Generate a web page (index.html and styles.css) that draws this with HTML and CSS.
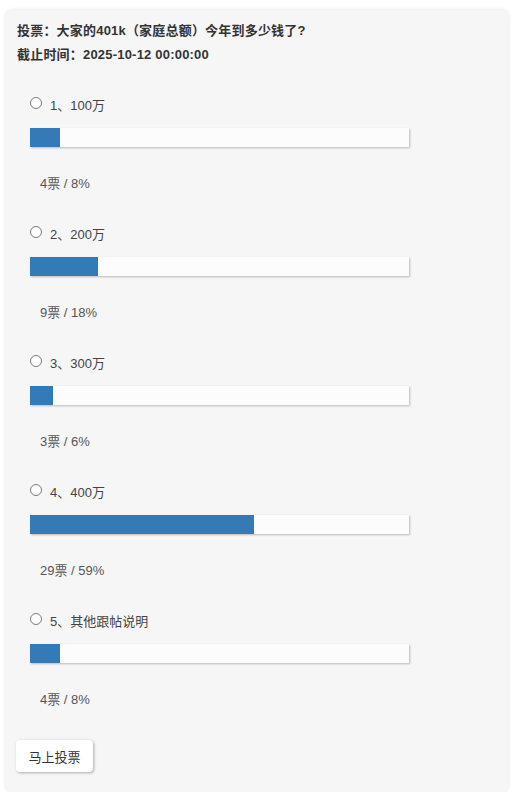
FILE: index.html
```html
<!DOCTYPE html>
<html lang="zh">
<head>
<meta charset="utf-8">
<link rel="stylesheet" href="styles.css">
</head>
<body>
<div class="poll">
  <div class="title">
    <div>投票：大家的401k（家庭总额）今年到多少钱了?</div>
    <div>截止时间：2025-10-12 00:00:00</div>
  </div>
  <div class="options">
    <div class="option">
      <label class="row"><input type="radio" name="v" class="radio"><span>1、100万</span></label>
      <div class="bar"><div class="fill" style="width:8%"></div></div>
      <div class="count">4票 / 8%</div>
    </div>
    <div class="option">
      <label class="row"><input type="radio" name="v" class="radio"><span>2、200万</span></label>
      <div class="bar"><div class="fill" style="width:18%"></div></div>
      <div class="count">9票 / 18%</div>
    </div>
    <div class="option">
      <label class="row"><input type="radio" name="v" class="radio"><span>3、300万</span></label>
      <div class="bar"><div class="fill" style="width:6%"></div></div>
      <div class="count">3票 / 6%</div>
    </div>
    <div class="option">
      <label class="row"><input type="radio" name="v" class="radio"><span>4、400万</span></label>
      <div class="bar"><div class="fill" style="width:59%"></div></div>
      <div class="count">29票 / 59%</div>
    </div>
    <div class="option">
      <label class="row"><input type="radio" name="v" class="radio"><span>5、其他跟帖说明</span></label>
      <div class="bar"><div class="fill" style="width:8%"></div></div>
      <div class="count">4票 / 8%</div>
    </div>
  </div>
  <button class="btn">马上投票</button>
</div>
</body>
</html>
```

FILE: styles.css
```css
* { box-sizing: border-box; }
body {
  margin: 0;
  background: #fff;
  font-family: "Liberation Sans", "Noto Sans CJK SC", sans-serif;
  font-size: 13px;
  color: #333;
}
.poll {
  margin: 10px 0 0 6px;
  width: 502px;
  height: 782px;
  background: #f6f6f6;
  border-radius: 6px;
  box-shadow: 0 0 4px rgba(0,0,0,0.12);
  padding: 9px 10px 20px 11px;
}
.title {
  font-weight: bold;
  line-height: 24px;
  color: #333;
  letter-spacing: 0.2px;
}
.options {
  margin-top: 27px;
  padding-left: 13px;
  display: flex;
  flex-direction: column;
  gap: 29px;
}
.option {
  display: flex;
  flex-direction: column;
}
.row {
  display: flex;
  align-items: center;
  height: 20px;
  color: #444;
}
.radio {
  appearance: none;
  -webkit-appearance: none;
  width: 12px;
  height: 12px;
  margin: -2px 8px 0 0;
  border: 1px solid #7a7a7a;
  border-radius: 50%;
  background: #fff;
}
.bar {
  margin-top: 14px;
  width: 379px;
  height: 19px;
  background: #fcfcfc;
  box-shadow: 1px 1px 2px rgba(0,0,0,0.25);
  display: flex;
}
.fill {
  height: 100%;
  background: #337ab7;
}
.count {
  margin-top: 27px;
  padding-left: 10px;
  line-height: 20px;
  color: #555;
}
.btn {
  margin-top: 30px;
  margin-left: -1px;
  width: 77px;
  height: 32px;
  background: #fff;
  border: none;
  border-radius: 4px;
  box-shadow: 1px 1px 3px rgba(0,0,0,0.3);
  font-family: "Liberation Sans", "Noto Sans CJK SC", sans-serif;
  font-size: 13px;
  color: #333;
  padding: 0;
}
```
